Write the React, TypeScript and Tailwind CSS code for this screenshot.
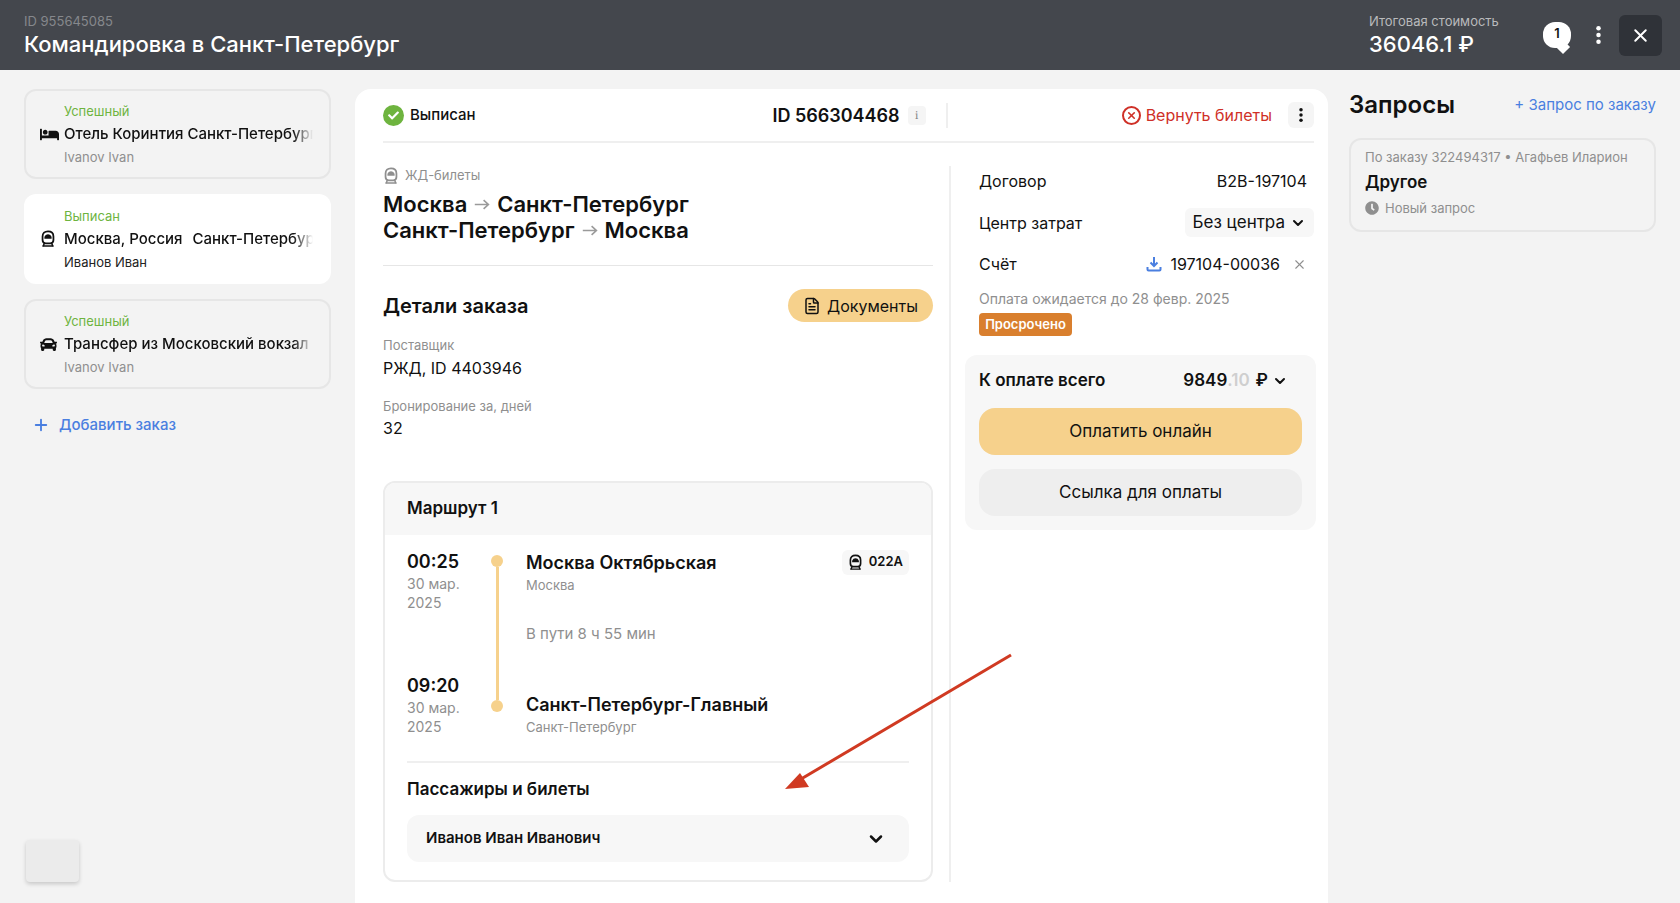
import { ChevronDown, FileText, Plus, X } from "lucide-react";
import { FaBed, FaCar, FaCheck, FaClock } from "react-icons/fa";

function TrainIcon({ className }: { className?: string }) {
  return (
    <svg viewBox="0 0 20 22" className={className} fill="none">
      <path
        d="M10 1.5c4.3 0 6.8 2.4 6.8 6.3v4.6c0 2.6-1.5 4.1-4 4.1H7.200c-2.500 0-4-1.500-4-4.100V7.800C3.200 3.900 5.700 1.500 10 1.500Z"
        stroke="currentColor"
        strokeWidth="2.200"
      />
      <path d="M5.500 8.500C6.500 6.300 8 5.200 10 5.200s3.500 1.100 4.500 3.300v2.300h-9V8.500Z" fill="currentColor" />
      <path d="M5.500 16.500 3.500 20.500M14.500 16.500l2 4M3 19.800h14" stroke="currentColor" strokeWidth="1.800" />
    </svg>
  );
}

function RouteArrow({ className }: { className?: string }) {
  return (
    <svg viewBox="0 0 20 14" className={className} fill="none" stroke="currentColor" strokeWidth="2">
      <path d="M1 7h17M12 1.500 18 7l-6 5.500" />
    </svg>
  );
}

function Dots({ className }: { className?: string }) {
  return (
    <svg viewBox="0 0 4 16" className={className} fill="currentColor">
      <circle cx="2" cy="2" r="2" />
      <circle cx="2" cy="8" r="2" />
      <circle cx="2" cy="14" r="2" />
    </svg>
  );
}

function OrderCard({
  status,
  icon,
  title,
  name,
  active,
}: {
  status: string;
  icon: React.ReactNode;
  title: React.ReactNode;
  name: string;
  active?: boolean;
}) {
  return (
    <div
      className={
        active
          ? "h-[90px] rounded-xl bg-white pl-[16px] pr-[18px] pt-[12px]"
          : "h-[90px] rounded-xl border-2 border-[#e6e6e6] pl-[14px] pr-[16px] pt-[10px]"
      }
    >
      <div className="pl-[24px] text-[13px] leading-[20px] text-[#6eb43f]">{status}</div>
      <div className="flex h-[26px] items-center">
        <div className="flex w-[24px] shrink-0 items-center text-[#111]">{icon}</div>
        <div className="min-w-0 flex-1 overflow-hidden whitespace-nowrap text-[15px] font-medium text-[#111] [mask-image:linear-gradient(to_right,black_92%,transparent)]">
          {title}
        </div>
      </div>
      <div className={active ? "pl-[24px] text-[13px] leading-[20px] text-[#222]" : "pl-[24px] text-[13px] leading-[20px] text-[#8f8f8f]"}>
        {name}
      </div>
    </div>
  );
}

function Route() {
  return (
    <div className="mt-[41px] rounded-xl border-2 border-[#ececec]">
      <div className="flex h-[52px] items-center rounded-t-[10px] bg-[#f7f7f7] px-[22px] text-[17px] font-semibold text-[#111]">
        Маршрут 1
      </div>
      <div className="px-[22px] pb-[18px] pt-[15px]">
        <div className="flex">
          <div className="flex h-[186px] w-[83px] shrink-0 flex-col justify-between">
            <div>
              <div className="text-[18px] font-semibold leading-[24px] text-[#111]">00:25</div>
              <div className="w-[60px] text-[14px] leading-[19px] text-[#8f8f8f]">30 мар. 2025</div>
            </div>
            <div>
              <div className="text-[18px] font-semibold leading-[24px] text-[#111]">09:20</div>
              <div className="w-[60px] text-[14px] leading-[19px] text-[#8f8f8f]">30 мар. 2025</div>
            </div>
          </div>
          <div className="mt-[5px] flex h-[157px] w-[14px] shrink-0 flex-col items-center">
            <div className="h-[12px] w-[12px] rounded-full bg-[#f6d18c]" />
            <div className="w-[3px] flex-1 bg-[#f6d18c]" />
            <div className="h-[12px] w-[12px] rounded-full bg-[#f6d18c]" />
          </div>
          <div className="ml-[22px] min-w-0 flex-1">
            <div className="flex h-[24px] items-center justify-between">
              <div className="text-[18px] font-semibold text-[#111]">Москва Октябрьская</div>
              <div className="flex h-[25px] items-center gap-[6px] rounded-md bg-[#f7f7f7] px-[6px] text-[13px] font-semibold text-[#111]">
                <TrainIcon className="h-[17px] w-[15px]" />
                022А
              </div>
            </div>
            <div className="mt-[1px] text-[13px] leading-[20px] text-[#8f8f8f]">Москва</div>
            <div className="mt-[29px] text-[15px] leading-[20px] text-[#8f8f8f]">В пути 8 ч 55 мин</div>
            <div className="mt-[49px] text-[18px] font-semibold leading-[24px] text-[#111]">Санкт-Петербург-Главный</div>
            <div className="text-[13px] leading-[20px] text-[#8f8f8f]">Санкт-Петербург</div>
          </div>
        </div>
        <div className="mt-[24px] border-t-2 border-[#efefef]" />
        <div className="mt-[14px] text-[17px] font-semibold leading-[24px] text-[#111]">Пассажиры и билеты</div>
        <div className="mt-[14px] flex h-[47px] items-center justify-between rounded-xl bg-[#f7f7f7] pl-[19px] pr-[23px]">
          <span className="text-[15px] font-semibold text-[#111]">Иванов Иван Иванович</span>
          <ChevronDown className="h-[20px] w-[20px] text-[#111]" strokeWidth={3} />
        </div>
      </div>
    </div>
  );
}

function PaymentSide() {
  return (
    <div className="w-[365px] shrink-0 border-l-2 border-[#efefef] pl-[14px] pt-[3px]">
      <div className="pl-[14px] text-[16px] text-[#111]">
        <div className="flex h-[24px] items-center justify-between pr-[7px]">
          <span>Договор</span>
          <span>B2B-197104</span>
        </div>
        <div className="mt-[15px] flex h-[29px] items-center justify-between">
          <span>Центр затрат</span>
          <span className="flex h-[29px] items-center gap-[5px] rounded-md bg-[#f7f7f7] px-[8px] text-[17px]">
            Без центра
            <ChevronDown className="h-[16px] w-[16px]" strokeWidth={3} />
          </span>
        </div>
        <div className="mt-[15px] flex h-[24px] items-center justify-between pr-[7px]">
          <span>Счёт</span>
          <span className="flex items-center gap-[8px]">
            <svg viewBox="0 0 16 16" className="h-[16px] w-[16px] text-[#4a7fe0]" fill="none" stroke="currentColor" strokeWidth="2">
              <path d="M8 1v8.500M4.500 6.500 8 10l3.500-3.500M1.500 11v2.500c0 .6.400 1 1 1h11c.6 0 1-.4 1-1V11" />
            </svg>
            197104-00036
            <X className="ml-[4px] h-[15px] w-[15px] text-[#8f8f8f]" strokeWidth={1.750} />
          </span>
        </div>
        <div className="mt-[13px] text-[14px] leading-[20px] text-[#8f8f8f]">Оплата ожидается до 28 февр. 2025</div>
        <div className="mt-[4px] flex h-[23px] w-[93px] items-center justify-center rounded bg-[#d97f2e] text-[13px] font-semibold text-white">
          Просрочено
        </div>
      </div>
      <div className="mt-[19px] h-[175px] w-[351px] rounded-xl bg-[#f7f7f7] px-[14px] pt-[14px]">
        <div className="flex h-[24px] items-center justify-between pr-[14px]">
          <span className="text-[17px] font-semibold text-[#111]">К оплате всего</span>
          <span className="flex items-center text-[17px] font-semibold text-[#111]">
            9849<span className="text-[#cfcfcf]">.10</span>
            <span className="ml-[6px]">₽</span>
            <ChevronDown className="ml-[4px] h-[16px] w-[16px]" strokeWidth={3} />
          </span>
        </div>
        <div className="mt-[15px] flex h-[47px] items-center justify-center rounded-2xl bg-[#f6d18c] text-[17px] text-[#111]">
          Оплатить онлайн
        </div>
        <div className="mt-[14px] flex h-[47px] items-center justify-center rounded-2xl bg-[#eeeeee] text-[17px] text-[#111]">
          Ссылка для оплаты
        </div>
      </div>
    </div>
  );
}

export default function App() {
  return (
    <div className="relative flex h-[903px] flex-col overflow-hidden bg-[#f3f3f3] font-['Inter','Noto_Sans',sans-serif]">
      {/* Header */}
      <header className="flex h-[70px] shrink-0 items-center justify-between bg-[#44474d] pl-[24px] pr-[18px]">
        <div>
          <div className="text-[13px] leading-[18px] text-[#86888c]">ID 955645085</div>
          <div className="text-[22px] font-medium leading-[28px] text-white">Командировка в Санкт-Петербург</div>
        </div>
        <div className="flex items-center">
          <div className="w-[174px]">
            <div className="text-[13px] leading-[18px] text-[#b9babc]">Итоговая стоимость</div>
            <div className="text-[22px] font-medium leading-[28px] text-white">36046.1 ₽</div>
          </div>
          <div className="relative flex h-[26px] w-[28px] justify-center rounded-[12px] bg-white text-[13px] font-semibold leading-[22px] text-[#111]">
            1
            <div className="absolute bottom-[-4px] right-[3px] h-[10px] w-[10px] rotate-45 bg-white" />
          </div>
          <Dots className="ml-[25px] h-[18px] w-[5px] text-white" />
          <div className="ml-[18px] flex h-[41px] w-[43px] items-center justify-center rounded-md bg-[#2f3238]">
            <X className="h-[21px] w-[21px] text-white" strokeWidth={2.250} />
          </div>
        </div>
      </header>

      <div className="flex min-h-0 flex-1 pt-[19px]">
        {/* Orders */}
        <aside className="w-[355px] shrink-0 px-[24px]">
          <div className="flex flex-col gap-[15px]">
            <OrderCard
              status="Успешный"
              icon={<FaBed className="h-[17px] w-[19px]" />}
              title="Отель Коринтия Санкт-Петербург"
              name="Ivanov Ivan"
            />
            <OrderCard
              active
              status="Выписан"
              icon={<TrainIcon className="h-[18px] w-[16px]" />}
              title={
                <span className="flex items-center gap-[5px]">
                  Москва, Россия
                  <RouteArrow className="h-[11px] w-[15px] text-[#cfcfcf]" />
                  Санкт-Петербург
                </span>
              }
              name="Иванов Иван"
            />
            <OrderCard
              status="Успешный"
              icon={<FaCar className="h-[17px] w-[17px]" />}
              title="Трансфер из Московский вокзал"
              name="Ivanov Ivan"
            />
          </div>
          <div className="mt-[25px] flex items-center gap-[9px] pl-[8px] text-[15px] font-medium text-[#4a7fe0]">
            <Plus className="h-[18px] w-[18px]" strokeWidth={2.500} />
            Добавить заказ
          </div>
        </aside>

        {/* Order details */}
        <main className="w-[973px] shrink-0 rounded-t-2xl bg-white pl-[28px] pr-[14px]">
          <div className="flex h-[54px] items-center border-b-2 border-[#efefef]">
            <div className="flex h-[24px] w-[21px] items-center justify-center">
              <div className="flex h-[21px] w-[21px] items-center justify-center rounded-full bg-[#6eb43f]">
                <FaCheck className="h-[11px] w-[11px] text-white" />
              </div>
            </div>
            <span className="ml-[6px] text-[15px] font-medium text-[#111]">Выписан</span>
            <div className="flex-1" />
            <span className="text-[18px] font-semibold text-[#111]">ID 566304468</span>
            <div className="ml-[8px] flex h-[19px] w-[18px] items-center justify-center rounded bg-[#f5f5f5] font-serif text-[12px] text-[#888]">
              i
            </div>
            <div className="ml-[20px] h-[25px] w-[2px] bg-[#efefef]" />
            <div className="ml-[174px] flex h-[19px] w-[19px] items-center justify-center rounded-full border-2 border-[#cf3027]">
              <X className="h-[11px] w-[11px] text-[#cf3027]" strokeWidth={3.500} />
            </div>
            <span className="ml-[5px] text-[16px] text-[#cf3027]">Вернуть билеты</span>
            <div className="ml-[16px] flex h-[26px] w-[26px] items-center justify-center rounded-md bg-[#f5f5f5]">
              <Dots className="h-[14px] w-[4px] text-[#111]" />
            </div>
          </div>

          <div className="mt-[23px] flex">
            <div className="w-[550px] shrink-0">
              <div className="mt-[0px] flex h-[20px] items-center gap-[6px] text-[13px] text-[#8f8f8f]">
                <TrainIcon className="h-[18px] w-[16px]" />
                ЖД-билеты
              </div>
              <div className="mt-[5px] text-[22px] font-semibold leading-[26px] text-[#111]">
                <div className="flex items-center gap-[7px]">
                  Москва
                  <RouteArrow className="h-[13px] w-[16px] text-[#9a9a9a]" />
                  Санкт-Петербург
                </div>
                <div className="flex items-center gap-[7px]">
                  Санкт-Петербург
                  <RouteArrow className="h-[13px] w-[16px] text-[#9a9a9a]" />
                  Москва
                </div>
              </div>
              <div className="mt-[22px] border-t border-[#e6e6e6]" />
              <div className="mt-[23px] flex h-[33px] items-center justify-between">
                <span className="text-[20px] font-semibold text-[#111]">Детали заказа</span>
                <span className="flex h-[33px] items-center gap-[6px] rounded-full bg-[#f6d18c] px-[15px] text-[16px] text-[#111]">
                  <FileText className="h-[18px] w-[18px]" strokeWidth={2} />
                  Документы
                </span>
              </div>
              <div className="mt-[14px] text-[13px] leading-[18px] text-[#8f8f8f]">Поставщик</div>
              <div className="mt-[2px] text-[16px] leading-[24px] text-[#111]">РЖД, ID 4403946</div>
              <div className="mt-[17px] text-[13px] leading-[18px] text-[#8f8f8f]">Бронирование за, дней</div>
              <div className="mt-[1px] text-[16px] leading-[24px] text-[#111]">32</div>
              <Route />
            </div>
            <div className="w-[16px] shrink-0" />
            <PaymentSide />
          </div>
        </main>

        {/* Requests */}
        <aside className="ml-[21px] w-[307px] shrink-0">
          <div className="flex h-[32px] items-center justify-between">
            <span className="text-[24px] font-semibold text-[#111]">Запросы</span>
            <span className="text-[15px] text-[#4a7fe0]">+ Запрос по заказу</span>
          </div>
          <div className="mt-[17px] h-[94px] rounded-xl border-2 border-[#e6e6e6] px-[14px] pt-[7px]">
            <div className="text-[13px] leading-[20px] text-[#8f8f8f]">По заказу 322494317 • Агафьев Иларион</div>
            <div className="mt-[3px] text-[17px] font-semibold leading-[24px] text-[#111]">Другое</div>
            <div className="mt-[4px] flex items-center gap-[6px] text-[13px] leading-[20px] text-[#8f8f8f]">
              <FaClock className="h-[14px] w-[14px]" />
              Новый запрос
            </div>
          </div>
        </aside>
      </div>

      {/* Floating button */}
      <div className="absolute left-[26px] top-[840px] h-[42px] w-[53px] rounded-sm bg-[#ebebeb] shadow-[0_2px_4px_rgba(0,0,0,0.18)]" />

      {/* Annotation arrow */}
      <svg className="absolute left-0 top-0 h-[903px] w-[1680px]" viewBox="0 0 1680 903" fill="none">
        <path d="M1011 655 796 782" stroke="#d03a22" strokeWidth="3" />
        <path d="M785 789 800 773 809 787Z" fill="#d03a22" />
      </svg>
    </div>
  );
}
